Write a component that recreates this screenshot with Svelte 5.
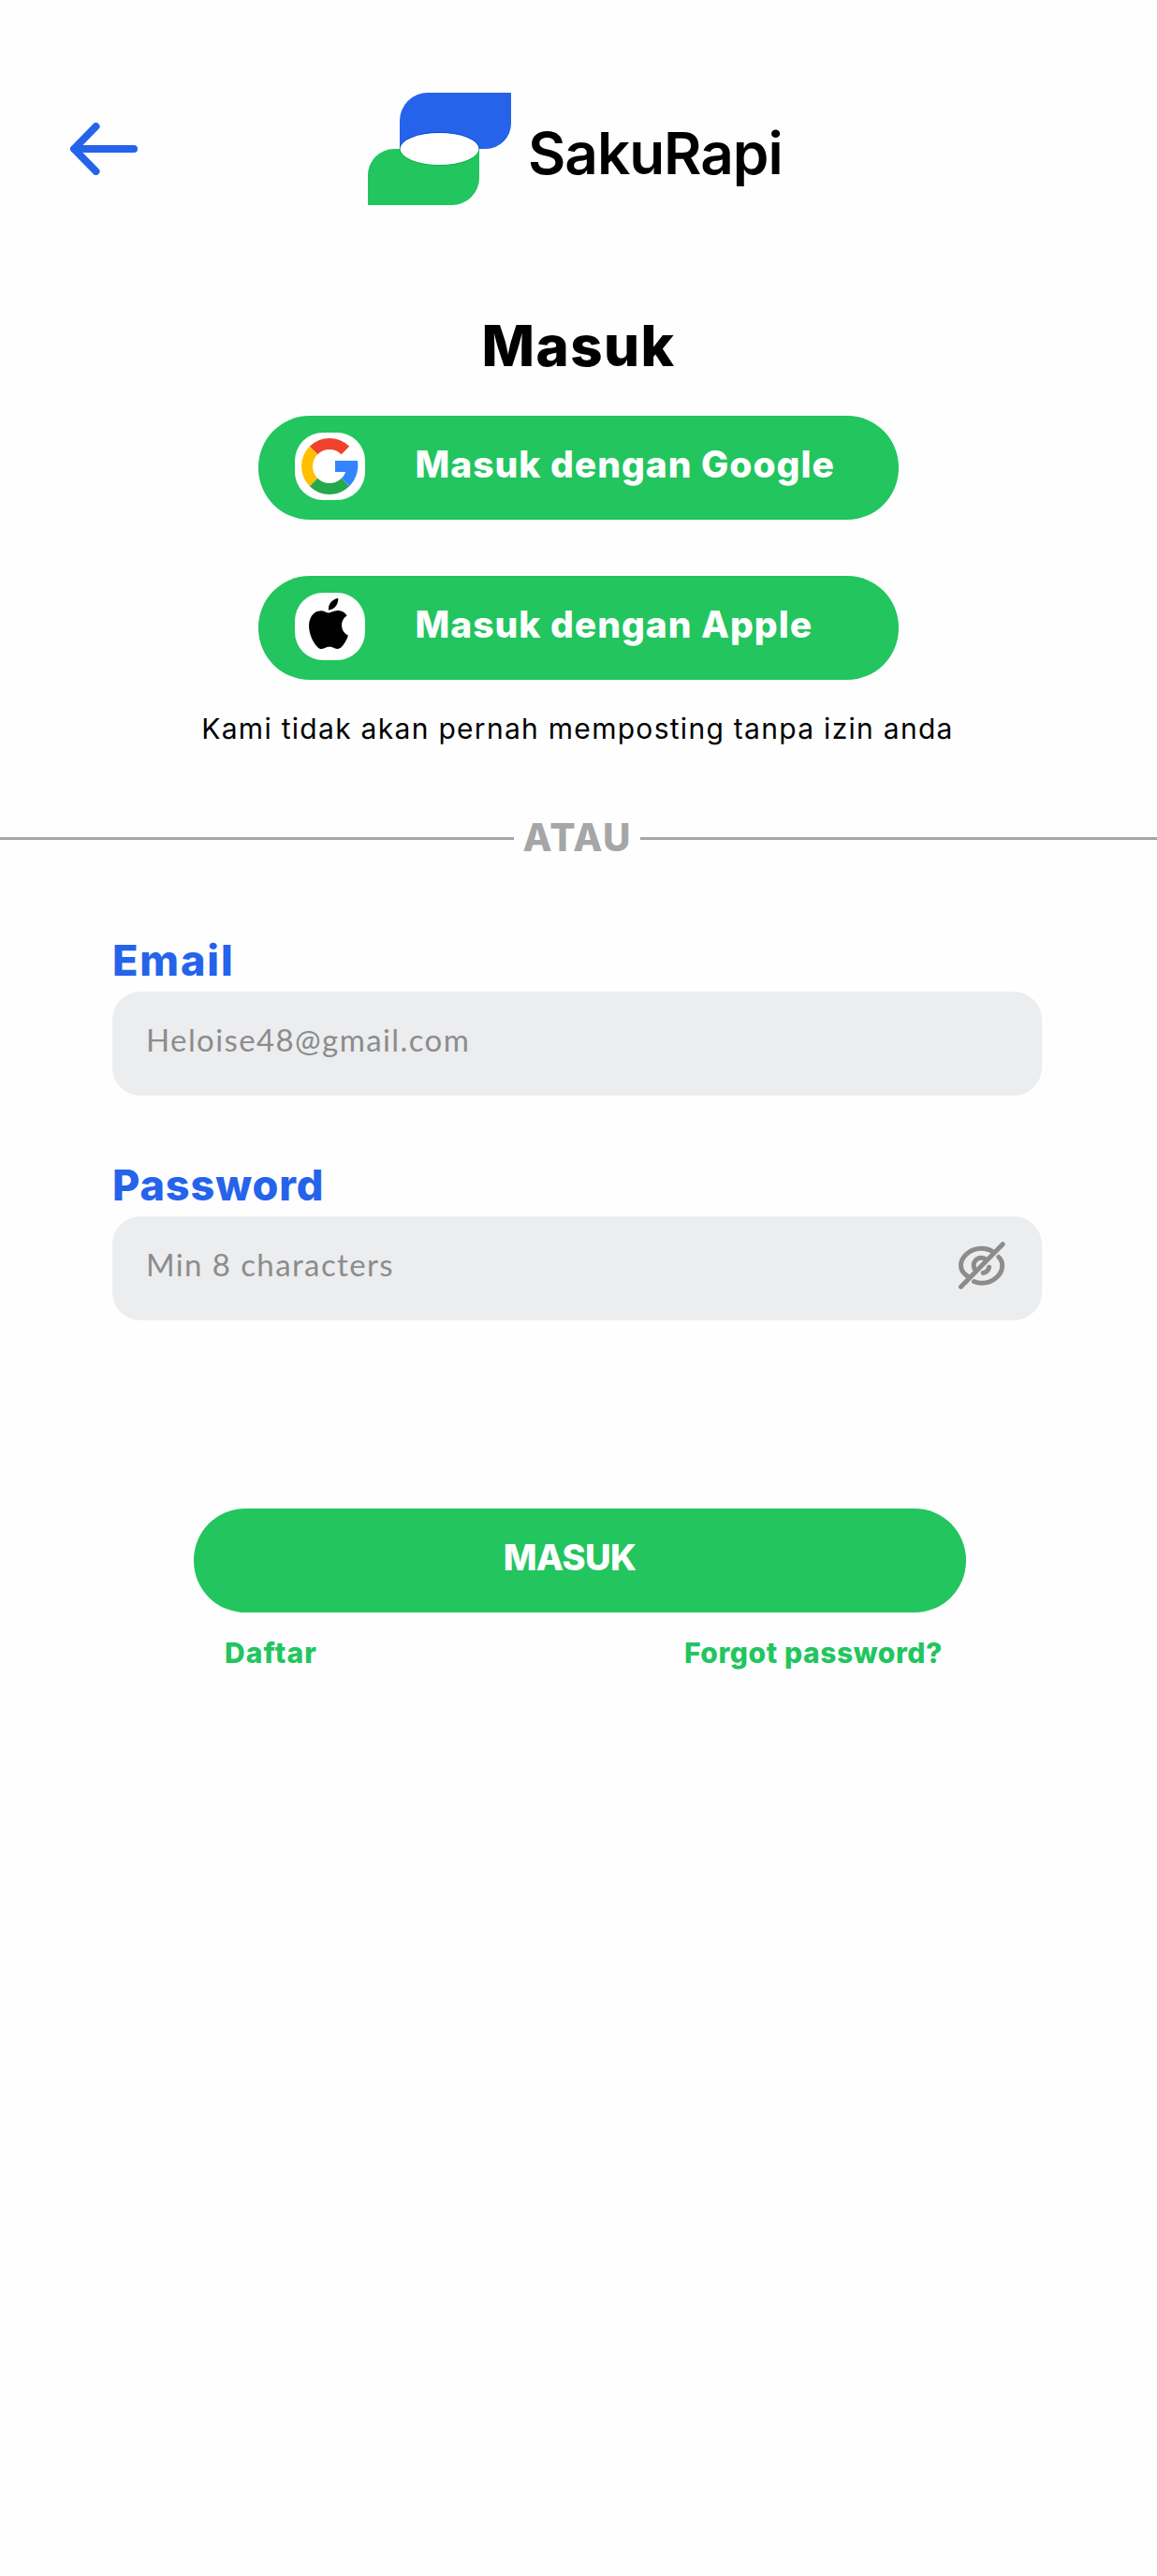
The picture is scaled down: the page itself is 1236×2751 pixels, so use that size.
<script>
  const providers = [
    { id: 'google', label: 'Masuk dengan Google' },
    { id: 'apple', label: 'Masuk dengan Apple' }
  ];
</script>

<main class="screen">
  <header class="top">
    <svg class="back" width="72" height="56" viewBox="0 0 72 56" fill="none" stroke="#2563eb" stroke-width="8" stroke-linecap="round" stroke-linejoin="round">
      <path d="M68 28H4.500M27.500 4L4 28L27.500 52" />
    </svg>
    <div class="brand">
      <svg width="153" height="120" viewBox="0 0 153 120">
        <path fill="#2563eb" d="M34 60V30A30 30 0 0 1 64 0H153V33A27 27 0 0 1 126 60Z" />
        <path fill="#22c55e" d="M0 120V88A28 28 0 0 1 28 60H119V91A29 29 0 0 1 90 120Z" />
        <path fill="none" stroke="#0b45d8" stroke-width="1.200" d="M34.300 60A42.200 17.300 0 0 1 118.700 60" />
        <path fill="none" stroke="#08b04a" stroke-width="1.200" d="M34.300 60A42.200 17.300 0 0 0 118.700 60" />
        <ellipse cx="76.500" cy="60" rx="42" ry="17" fill="#fff" />
      </svg>
      <span class="name">SakuRapi</span>
    </div>
  </header>

  <h1>Masuk</h1>

  <section class="social">
    {#each providers as p (p.id)}
      <button class="pill provider" type="button">
        <span class="badge">
          {#if p.id === 'google'}
            <svg width="61" height="60" viewBox="0 0 61 60" fill="none">
              <g stroke-width="12">
                <path stroke="#f1432b" d="M13.030 13.030A24 24 0 0 1 46.970 13.030" />
                <path stroke="#ffbf00" d="M13.030 46.970A24 24 0 0 1 13.030 13.030" />
                <path stroke="#26a94b" d="M46.970 46.970A24 24 0 0 1 13.030 46.970" />
              </g>
              <path fill="#3385ff" d="M36 24H60C61.500 34 58.500 44 51.200 51.200L42.700 42.700C44.800 41 46.300 38.700 47 36H36Z" />
            </svg>
          {:else}
            <svg class="apple" width="42" height="54" viewBox="2.200 0 19.600 24" preserveAspectRatio="none">
              <path d="M12.152 6.896c-.948 0-2.415-1.078-3.960-1.040-2.040.027-3.910 1.183-4.961 3.014-2.117 3.675-.546 9.103 1.519 12.090 1.013 1.454 2.208 3.090 3.792 3.039 1.520-.065 2.090-.987 3.935-.987 1.831 0 2.350.987 3.960.948 1.637-.026 2.676-1.480 3.676-2.948 1.156-1.688 1.636-3.325 1.662-3.415-.039-.013-3.182-1.221-3.220-4.857-.026-3.040 2.480-4.494 2.597-4.559-1.429-2.090-3.623-2.324-4.390-2.376-2-.156-3.675 1.090-4.610 1.090zM15.530 3.830c.843-1.012 1.400-2.427 1.245-3.830-1.207.052-2.662.805-3.532 1.818-.780.896-1.454 2.338-1.273 3.714 1.338.104 2.715-.688 3.559-1.701" />
            </svg>
          {/if}
        </span>
        <span class="text">{p.label}</span>
      </button>
    {/each}
  </section>

  <p class="note">Kami tidak akan pernah memposting tanpa izin anda</p>

  <div class="divider"><span class="rule"></span><span class="or">ATAU</span><span class="rule"></span></div>

  <form>
    <div class="group">
      <span class="label email">Email</span>
      <div class="field"><span class="hint">Heloise48@gmail.com</span></div>
    </div>
    <div class="group">
      <span class="label">Password</span>
      <div class="field">
        <span class="hint">Min 8 characters</span>
        <svg class="eye" width="50" height="52" viewBox="0 0 50 52" fill="none" stroke="#8c8c8c" stroke-width="5" stroke-linecap="round">
          <path d="M2.500 48.200L47.200 2.700" />
          <path d="M10.500 37.500C5.500 34.500 2.500 30 2.500 25.500C2.500 16 12.500 7.200 24.500 7.200C29.500 7.200 34 8.700 37.500 11.200" />
          <path d="M42.800 16.500C45.500 19 46.700 22.500 46.700 25.500C46.700 35.500 36.500 44.300 25 44.300C22 44.300 19 43.700 16.500 42.500" />
          <path d="M18.800 31.200A8 8 0 0 1 29.800 19.300" />
          <path d="M32.600 27.200A8 8 0 0 1 26.300 33.400" />
        </svg>
      </div>
    </div>
    <button class="pill submit" type="button"><span class="text">MASUK</span></button>
    <nav class="links"><a href="#daftar" class="join">Daftar</a><a href="#forgot">Forgot password?</a></nav>
  </form>
</main>

<style>
  :global(body) { margin: 0; background: #fefefe; }
  .screen {
    box-sizing: border-box;
    width: 1236px;
    height: 2751px;
    padding-top: 99px;
    background: #fefefe;
    color: #000;
    font-family: Inter, 'Liberation Sans', sans-serif;
  }
  svg { display: block; flex: none; }
  .top { display: grid; grid-template-columns: 318px auto; align-items: center; padding-left: 75px; height: 120px; }
  .brand { display: flex; align-items: center; gap: 18px; }
  .name { font-size: 62px; font-weight: 600; line-height: 80px; letter-spacing: -1.020px; padding-top: 9px; }
  h1 { margin: 105px 0 30px; font-size: 60px; line-height: 90px; font-weight: 800; letter-spacing: 1.400px; text-align: center; }
  .social { display: flex; flex-direction: column; gap: 60px; width: 684px; margin: 0 auto; }
  .pill {
    display: flex;
    align-items: center;
    box-sizing: border-box;
    height: 111px;
    border: 0;
    border-radius: 55px;
    background: #22c55e;
    color: #fff;
    font: 800 39px/60px Inter, 'Liberation Sans', sans-serif;
  }
  .pill .text { padding-bottom: 7px; letter-spacing: 0.980px; }
  .provider { width: 100%; padding: 0 0 0 39px; gap: 53.500px; }
  .badge { display: flex; align-items: center; justify-content: center; width: 75px; height: 72px; margin-bottom: 3px; border-radius: 30px; background: #fff; }
  .apple { margin: 0 3px 6px 0; }
  .note { margin: 30px 0 63px; font-size: 30px; line-height: 45px; letter-spacing: 1.290px; text-indent: -2px; text-align: center; }
  .divider { display: grid; grid-template-columns: 549px 1fr 552px; align-items: center; height: 63px; color: #a6a6a6; }
  .rule { height: 3px; background: #a6a6a6; }
  .or { padding: 0 0 2px 9.500px; font-size: 40.500px; line-height: 61px; font-weight: 800; letter-spacing: 1.300px; }
  form { display: flex; flex-direction: column; gap: 62px; width: 993px; margin: 65px 0 0 120px; }
  .group { display: flex; flex-direction: column; }
  .label { font-size: 45px; line-height: 67px; font-weight: 800; letter-spacing: 0.900px; color: #2563eb; }
  .label.email { letter-spacing: 1.900px; }
  .field { display: flex; align-items: center; justify-content: space-between; box-sizing: border-box; height: 111px; padding: 0 39px 0 36px; border-radius: 30px; background: #ecedef; }
  .hint { padding-bottom: 9px; font: 400 33px/50px Lato, sans-serif; letter-spacing: 1.400px; color: #8c8c8c; }
  .eye { margin-bottom: 5px; }
  .submit { justify-content: center; width: 825px; margin: 139px 0 0 87px; padding: 0; }
  .submit .text { font-size: 38px; letter-spacing: -0.700px; padding-right: 22px; }
  .links { display: flex; justify-content: space-between; width: 767px; margin: -41px 0 0 120px; font-size: 30px; line-height: 45px; font-weight: 800; letter-spacing: 0.580px; }
  .links a { color: #22c55e; text-decoration: none; }
  .links .join { letter-spacing: 1.100px; }
</style>
